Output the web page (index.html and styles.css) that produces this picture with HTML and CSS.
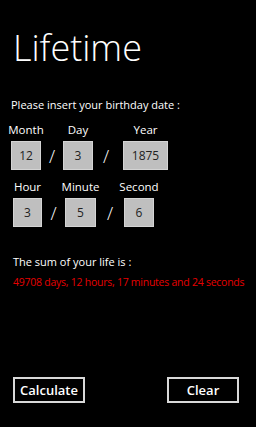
FILE: index.html
```html
<!DOCTYPE html>
<html lang="en">
<head>
    <meta charset="UTF-8">
    <title>Lifetime</title>
    <link rel="stylesheet" href="styles.css">
</head>
<body>
    <div class="page">
        <h1 class="title">Lifetime</h1>
        <p class="prompt">Please insert your birthday date :</p>

        <div class="date-row first">
            <div class="field w30">
                <label>Month</label>
                <div class="box">12</div>
            </div>
            <div class="slash s22">/</div>
            <div class="field w30">
                <label>Day</label>
                <div class="box">3</div>
            </div>
            <div class="slash s30">/</div>
            <div class="field w45">
                <label>Year</label>
                <div class="box">1875</div>
            </div>
        </div>

        <div class="date-row second">
            <div class="field w29">
                <label>Hour</label>
                <div class="box">3</div>
            </div>
            <div class="slash s23">/</div>
            <div class="field w31">
                <label>Minute</label>
                <div class="box">5</div>
            </div>
            <div class="slash s28">/</div>
            <div class="field w30">
                <label>Second</label>
                <div class="box">6</div>
            </div>
        </div>

        <p class="sum-label">The sum of your life is :</p>
        <p class="sum-value">49708 days, 12 hours, 17 minutes and 24 seconds</p>

        <div class="buttons">
            <button class="btn">Calculate</button>
            <button class="btn">Clear</button>
        </div>
    </div>
</body>
</html>
```

FILE: styles.css
```css
body {
    margin: 0;
    padding: 0;
    background-color: #000000;
    color: #ffffff;
    font-family: 'Open Sans', 'Liberation Sans', sans-serif;
}

.page {
    width: 256px;
    height: 427px;
    overflow: hidden;
}

.title {
    margin: 0;
    padding: 24px 0 0 13px;
    font-size: 36px;
    font-weight: 300;
    line-height: 48px;
}

.prompt {
    margin: 26px 0 0 11px;
    font-size: 11px;
    line-height: 14px;
}

.date-row {
    display: flex;
    align-items: flex-end;
}

.date-row.first {
    margin-top: 11px;
    padding-left: 11px;
}

.date-row.second {
    margin-top: 10px;
    padding-left: 13px;
}

.field {
    display: flex;
    flex-direction: column;
    align-items: center;
}

.field label {
    font-size: 11.5px;
    line-height: 14px;
    white-space: nowrap;
    margin-bottom: 4px;
}

.box {
    box-sizing: border-box;
    width: 100%;
    height: 29px;
    background-color: #bfbfbf;
    border: 1px solid #d4d4d4;
    color: #222222;
    font-size: 12px;
    display: flex;
    align-items: center;
    justify-content: center;
}

.w29 { width: 29px; }
.w30 { width: 30px; }
.w31 { width: 31px; }
.w45 { width: 45px; }

.slash {
    height: 29px;
    display: flex;
    align-items: center;
    justify-content: center;
    font-size: 18px;
    font-weight: 300;
}

.s22 { width: 22px; }
.s23 { width: 23px; }
.s28 { width: 28px; }
.s30 { width: 26px; margin-right: 4px; }

.sum-label {
    margin: 28px 0 0 13px;
    font-size: 11px;
    line-height: 14px;
}

.sum-value {
    margin: 6px 0 0 13px;
    font-size: 10.5px;
    letter-spacing: -0.25px;
    line-height: 14px;
    color: #e60000;
    white-space: nowrap;
}

.buttons {
    display: flex;
    justify-content: space-between;
    padding: 0 17px 0 13px;
    margin-top: 88px;
}

.btn {
    box-sizing: border-box;
    width: 72px;
    height: 26px;
    background: #000000;
    border: 2px solid #d9d9d9;
    color: #ffffff;
    font-family: 'Open Sans', 'Liberation Sans', sans-serif;
    font-size: 13px;
    font-weight: 600;
    padding: 0;
}
```
